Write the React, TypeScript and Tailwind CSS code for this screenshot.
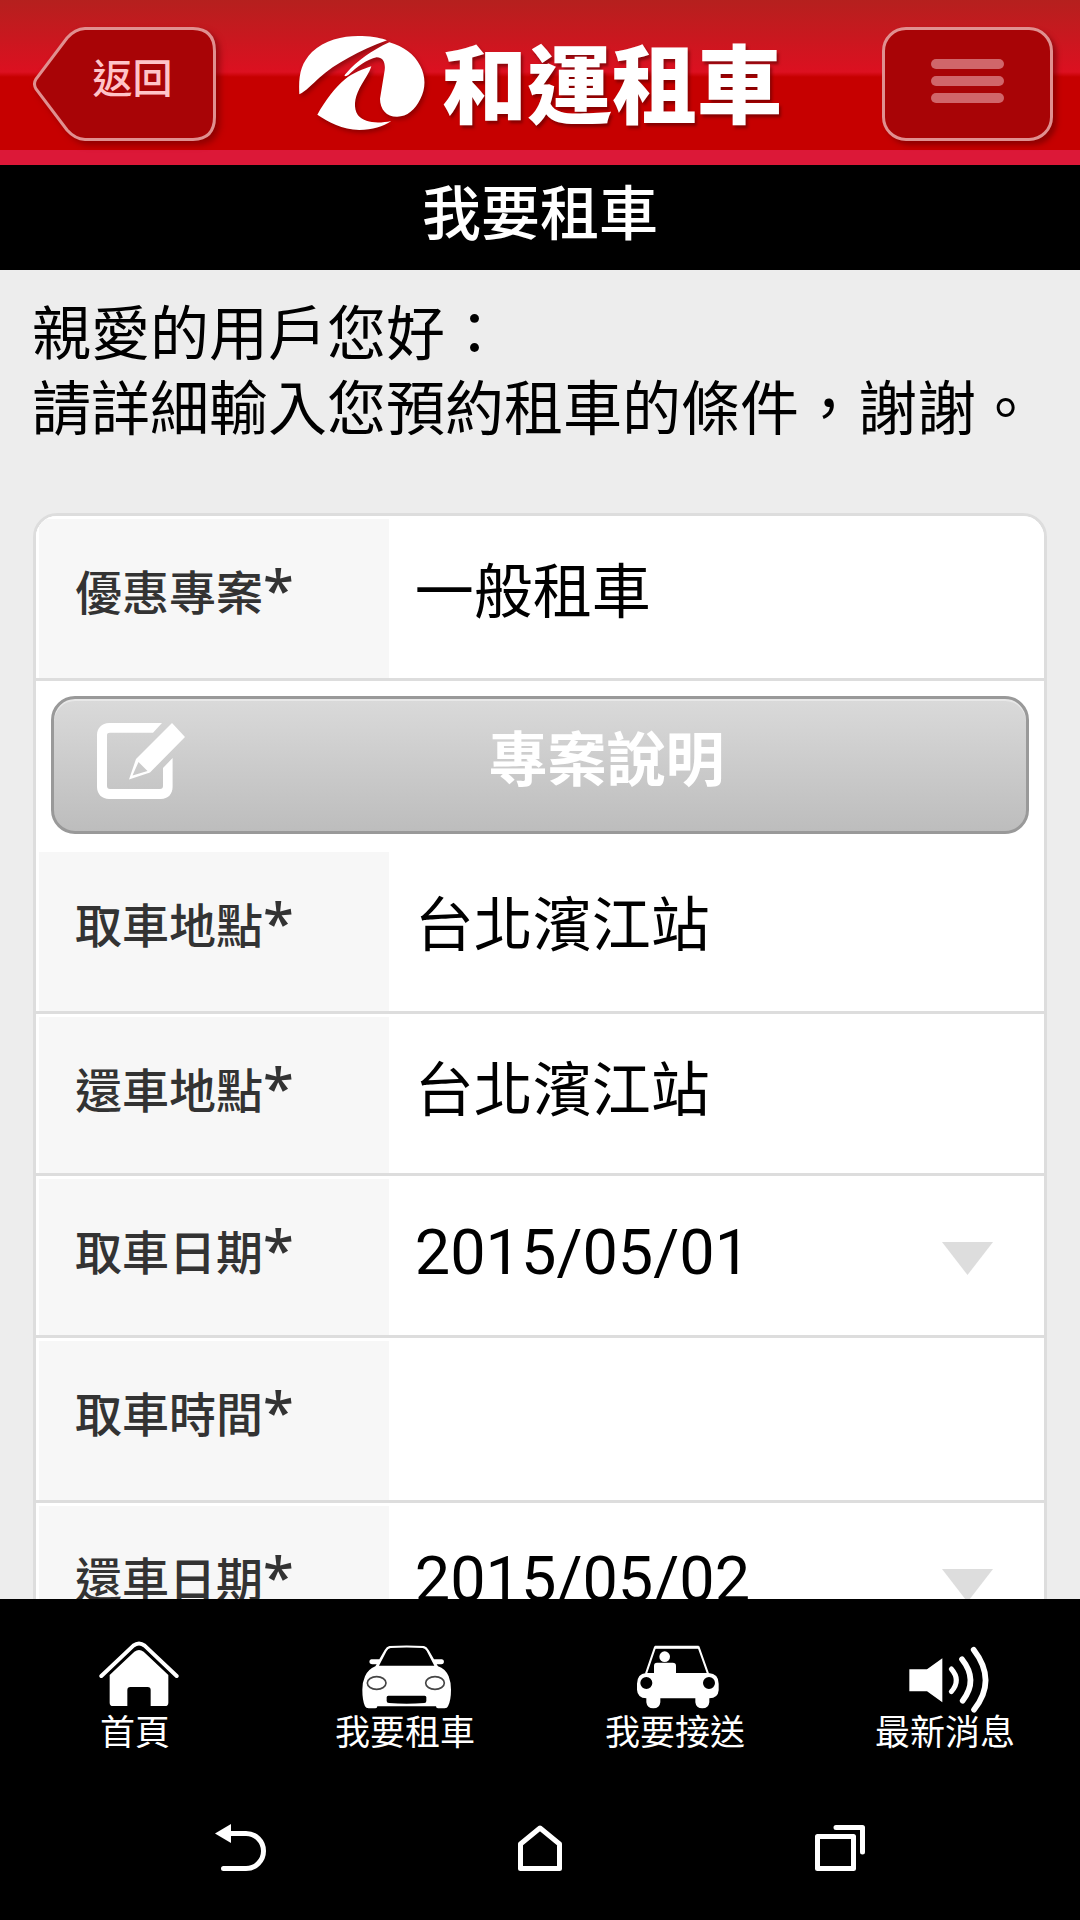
import React from "react";

type Field = {
  id: string;
  label: string;
  value: string;
  tall?: boolean;
  arrow?: boolean;
};

const planField: Field = { id: "plan", label: "優惠專案", value: "一般租車", tall: true };

const fields: Field[] = [
  { id: "pickup-place", label: "取車地點", value: "台北濱江站", tall: true },
  { id: "return-place", label: "還車地點", value: "台北濱江站" },
  { id: "pickup-date", label: "取車日期", value: "2015/05/01", arrow: true },
  { id: "pickup-time", label: "取車時間", value: "", tall: true },
  { id: "return-date", label: "還車日期", value: "2015/05/02", arrow: true },
];

const Logo: React.FC = () => (
  <svg viewBox="48 44 384 288" className="w-[128px] h-[96px] drop-shadow-[2px_3px_2px_rgba(90,0,0,0.5)]" fill="#fff" aria-hidden="true">
    <path d="M52 222C49 165 56 130 90 95C130 56 190 45 240 47C275 48 300 54 315 60C230 92 160 130 112 172C90 192 72 212 52 222Z" />
    <path d="M322 66C365 78 397 102 415 137C432 170 431 205 415 236C400 268 375 289 346 289C315 290 294 268 294 235L308 150C311 125 302 111 284 111C255 117 225 140 199 164C186 171 184 167 194 157C225 122 270 90 322 66Z" />
    <path d="M268 138C245 146 212 158 190 176C160 200 130 240 106 283C140 306 180 327 232 329C272 329 303 318 328 302C290 310 248 309 228 285C214 262 217 235 232 205C246 180 262 158 268 138Z" />
  </svg>
);

const EditIcon: React.FC = () => (
  <svg viewBox="0 0 92 82" className="w-[92px] h-[82px] shrink-0" fill="#fff" aria-hidden="true">
    <path d="M67 3H14C7 3 2 8 2 15V67C2 74 7 79 14 79H66C73 79 77.6 74 77.6 67V38L68 48V66C68 68 67 69 65 69H15C13 69 12 68 12 66V15C12 13.500 13 12.700 15 12.700H58Z" />
    <path fillRule="evenodd" d="M77 3L90 17L55 52.500L34 59.500L41 39ZM43.500 42L37.500 55.500L52.500 51Z" />
  </svg>
);

const FieldRow: React.FC<{ field: Field }> = ({ field }) => (
  <div className={`flex border-b-[3px] border-[#ddd] bg-white ${field.tall ? "h-[165px]" : "h-[162px]"}`}>
    <label
      htmlFor={field.id}
      className="w-[35%] shrink-0 border-t-[3px] border-l-[3px] border-white bg-[#f7f7f7] pl-9 pt-[51px] text-[47px] leading-[48px] font-medium text-[#333]"
    >
      {field.label}
      <span className="font-['Noto_Sans'] text-[56px] leading-0">*</span>
    </label>
    <div className="relative flex-1">
      <select
        id={field.id}
        defaultValue={field.value}
        className={`h-[154px] w-full appearance-none bg-transparent pl-[26px] text-black outline-none ${
          field.arrow ? "text-[63px]" : "text-[59px]"
        }`}
      >
        <option>{field.value}</option>
      </select>
      {field.arrow && (
        <svg viewBox="0 0 51 33" className="pointer-events-none absolute right-[51px] top-[66px] h-[33px] w-[51px]" fill="#ddd" aria-hidden="true">
          <path d="M0 0H51L25.500 33Z" />
        </svg>
      )}
    </div>
  </div>
);

const navItems = [
  {
    label: "首頁",
    icon: (
      <svg viewBox="15 62 300 216" className="h-[72px] w-[100px]" fill="#fff" aria-hidden="true">
        <path d="M64 167L160 76Q177 63 194 76L290 167" fill="none" stroke="#fff" strokeWidth="12" strokeLinecap="round" />
        <path d="M89 164L163 94Q177 84 191 94L265 164V247Q265 257 255 257H212V209Q212 200 203 200H151Q142 200 142 209V257H99Q89 257 89 247Z" />
      </svg>
    ),
  },
  {
    label: "我要租車",
    icon: (
      <svg viewBox="825 62 300 216" className="h-[72px] w-[100px]" fill="#fff" aria-hidden="true">
        <path
          fillRule="evenodd"
          d="M928 77Q980 74 1032 77Q1040 79 1046 89L1062 117H1086Q1092 118 1092 125Q1091 132 1084 132H1070L1074 138Q1096 145 1106 168Q1113 186 1113 208Q1113 240 1104 258Q1102 264 1094 264H1074Q1068 264 1068 258H892Q892 264 886 264H866Q858 264 855 258Q847 240 847 208Q847 186 855 168Q864 147 886 138L890 132H876Q868 131 868 125Q868 118 874 117H898L914 89Q920 79 928 77ZM932 83Q924 85 920 92L897 136H1063L1040 92Q1036 85 1028 83Q980 80 932 83ZM925 226Q920 226 920 231V242Q920 248 927 248Q980 253 1033 248Q1039 248 1039 242V231Q1039 226 1034 226Z"
        />
        <ellipse cx="890" cy="188" rx="28" ry="19" fill="none" stroke="#444" strokeWidth="5" />
        <ellipse cx="1065" cy="188" rx="28" ry="19" fill="none" stroke="#444" strokeWidth="5" />
      </svg>
    ),
  },
  {
    label: "我要接送",
    icon: (
      <svg viewBox="15 62 300 216" className="h-[72px] w-[100px]" fill="#fff" aria-hidden="true">
        <path d="M78 160L105 81H236L264 160" fill="none" stroke="#fff" strokeWidth="6" />
        <path d="M105 81H236" stroke="#fff" strokeWidth="9" />
        <circle cx="134" cy="109" r="16" />
        <path d="M102 160V136Q102 127 111 127H158Q168 127 168 136V160Z" />
        <path
          fillRule="evenodd"
          d="M78 158H266Q296 160 296 190V210Q294 234 268 234V246Q266 264 247 264Q228 264 226 246V234H121V246Q119 264 100 264Q81 264 79 246V234Q52 232 51 208V190Q52 160 78 158ZM79 170A18 18 0 1 0 79 206A18 18 0 1 0 79 170ZM267 170A18 18 0 1 0 267 206A18 18 0 1 0 267 170Z"
        />
      </svg>
    ),
  },
  {
    label: "最新消息",
    icon: (
      <svg viewBox="825 62 300 216" className="h-[72px] w-[100px]" fill="#fff" aria-hidden="true">
        <path d="M868 147H921L967 114V246L921 213H868Z" />
        <g fill="none" stroke="#fff" strokeLinecap="round">
          <path d="M994 146Q1024 180 994 214" strokeWidth="15" />
          <path d="M1026 117Q1076 180 1028 241" strokeWidth="17" />
          <path d="M1061 88Q1132 180 1062 268" strokeWidth="17" />
        </g>
      </svg>
    ),
  },
];

const App: React.FC = () => {
  return (
    <div className="flex h-screen flex-col bg-[#ededed] font-[Roboto,'Noto_Sans_CJK_TC',sans-serif] text-black">
      <header className="grid h-[165px] shrink-0 grid-cols-[1fr_auto_1fr] items-start border-b-[15px] border-[#dc1838] bg-[linear-gradient(to_bottom,#b5201e_0px,#dc1020_72px,#c60000_77px,#c60000_150px)] px-[27px] pt-[27px]">
        <button type="button" className="relative ml-1.5 h-[114px] w-[183px] pb-2 pl-4 text-center text-[40px] font-medium text-[#ffc4c8]">
          <svg viewBox="0 0 183 114" className="absolute inset-0 h-full w-full drop-shadow-[4px_4px_3px_rgba(90,0,0,0.5)]" aria-hidden="true">
            <path
              d="M52 1.500H160Q181.500 2 181.500 24V90Q181.500 112 160 112.500H52Q42 112 34 103L3 62Q0 57 3 52L34 11Q42 2 52 1.500Z"
              fill="#a80406"
              stroke="#e09090"
              strokeWidth="3"
            />
          </svg>
          <span className="relative">返回</span>
        </button>
        <a href="#" className="flex items-start gap-4 pt-2">
          <Logo />
          <span className="pt-[5px] text-[85px] leading-[96px] font-black text-white [text-shadow:2px_3px_3px_rgba(90,0,0,0.6)]">和運租車</span>
        </a>
        <button
          type="button"
          aria-label="選單"
          className="flex h-[114px] w-[171px] flex-col items-center gap-[7px] justify-self-end rounded-[24px] border-[3px] border-[#e09090] bg-[#a80406] pt-[29px] shadow-[4px_4px_5px_rgba(90,0,0,0.5)]"
        >
          <span className="h-[10px] w-[73px] rounded-full bg-[#d0666a]" />
          <span className="h-[10px] w-[73px] rounded-full bg-[#d0666a]" />
          <span className="h-[10px] w-[73px] rounded-full bg-[#d0666a]" />
        </button>
      </header>

      <h1 className="h-[105px] shrink-0 bg-black pt-[10px] text-center text-[59px] leading-[80px] font-medium text-white">我要租車</h1>

      <main className="min-h-0 flex-1 overflow-y-auto [scrollbar-width:none]">
        <p className="pt-[27px] pl-8 text-[59px] leading-[75px]">
          親愛的用戶您好：
          <br />
          請詳細輸入您預約租車的條件，謝謝。
        </p>

        <form className="mx-[33px] mt-[66px] overflow-hidden rounded-t-[24px] border-[3px] border-[#ddd] bg-white">
          <FieldRow field={planField} />
          <div className="h-[168px] px-[15px] pt-[15px]">
            <button
              type="button"
              className="flex h-[138px] w-full items-center rounded-[24px] border-[3px] border-[#999] bg-linear-to-b from-[#dadada] to-[#bdbdbd] pb-2 pl-[41px] shadow-[inset_0_2px_0_#e8e8e8]"
            >
              <EditIcon />
              <span className="flex-1 text-center text-[59px] leading-[60px] font-bold text-white">專案說明</span>
            </button>
          </div>
          {fields.map((field) => (
            <FieldRow key={field.id} field={field} />
          ))}
        </form>
      </main>

      <nav className="grid h-[177px] shrink-0 grid-cols-4 bg-black pt-[42px] text-[35px] leading-9 text-white">
        {navItems.map((item) => (
          <a key={item.label} href="#" className="flex flex-col items-center gap-[3px]">
            {item.icon}
            {item.label}
          </a>
        ))}
      </nav>

      {/* Android system bar */}
      <div className="grid h-36 shrink-0 grid-cols-3 items-center justify-items-center bg-black px-[90px]">
        <button type="button" aria-label="返回">
          <svg viewBox="0 0 60 56" className="h-[56px] w-[60px]" aria-hidden="true">
            <path d="M20 13.500H36A17.500 17.500 0 0 1 36 48.500H13.500" fill="none" stroke="#fff" strokeWidth="5" strokeLinecap="round" />
            <path d="M5 13.500L21 4V23Z" fill="#fff" />
          </svg>
        </button>
        <button type="button" aria-label="主畫面">
          <svg viewBox="0 0 60 56" className="h-[56px] w-[60px]" fill="none" stroke="#fff" strokeWidth="5" strokeLinejoin="round" aria-hidden="true">
            <path d="M10.500 24L30 8L49.500 24V48.500H10.500Z" />
          </svg>
        </button>
        <button type="button" aria-label="最近使用">
          <svg viewBox="0 0 60 56" className="h-[56px] w-[60px]" fill="none" stroke="#fff" strokeWidth="5" strokeLinecap="round" strokeLinejoin="round" aria-hidden="true">
            <path d="M7.500 16.500H43.500V48.500H7.500Z" />
            <path d="M26 7.500H52.500V32" />
          </svg>
        </button>
      </div>
    </div>
  );
};

export default App;
